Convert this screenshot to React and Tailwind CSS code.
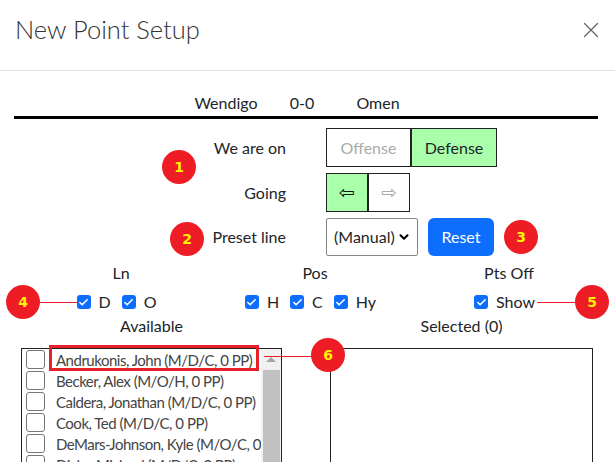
import { X, Check, ChevronDown } from 'lucide-react';

const players = [
    'Andrukonis, John (M/D/C, 0 PP)',
    'Becker, Alex (M/O/H, 0 PP)',
    'Caldera, Jonathan (M/D/C, 0 PP)',
    'Cook, Ted (M/D/C, 0 PP)',
    'DeMars-Johnson, Kyle (M/O/C, 0 PP)',
    'Dicks, Michael (M/D/C, 0 PP)',
];

const Badge = ({ n, className }) => (
    <div
        className={`absolute w-[34px] h-[34px] rounded-full bg-[#ee1c24] flex items-center justify-center text-[#fff200] text-[14px] font-bold font-['DejaVu_Sans',sans-serif] ${className}`}
    >
        {n}
    </div>
);

const Box = () => (
    <span className="w-[14px] h-[14px] rounded-[3px] bg-[#0d6efd] flex items-center justify-center">
        <Check size={11} strokeWidth={3.5} className="text-white" />
    </span>
);

const CheckItem = ({ label }) => (
    <span className="flex items-center gap-[8px]">
        <Box />
        <span>{label}</span>
    </span>
);

const App = () => {
    return (
        <div className="relative w-[615px] h-[462px] overflow-hidden bg-white text-[#212529] text-[16px] font-['Lato',sans-serif]">
            {/* header */}
            <div className="h-[71px] flex items-center justify-between pl-[15px] pr-[11px] border-b border-[#dee2e6]">
                <h1 className="text-[25.5px] font-light text-[#333] -mt-[11px]">New Point Setup</h1>
                <X size={26} strokeWidth={1.2} className="text-[#666] -mt-[11px]" />
            </div>

            {/* score */}
            <div className="ml-[14px] w-[584px] mt-[20px] border-b-[3px] border-black">
                <div className="flex pl-[174px] h-[25px] leading-[24px]">
                    <span className="w-[76px] text-center">Wendigo</span>
                    <span className="w-[76px] text-center">0-0</span>
                    <span className="w-[76px] text-center">Omen</span>
                </div>
            </div>

            {/* settings */}
            <div className="ml-[14px] mt-[9px] grid grid-cols-[272px_auto] gap-x-[40px] gap-y-[6px] items-center">
                <div className="text-right">We are on</div>
                <div className="flex h-[39px]">
                    <button className="w-[85px] border border-[#222] text-[#aaa]">Offense</button>
                    <button className="w-[86px] border border-[#222] bg-[#aaffaa]">Defense</button>
                </div>
                <div className="text-right">Going</div>
                <div className="flex h-[39px] font-['DejaVu_Sans',sans-serif] text-[19px]">
                    <button className="w-[42px] border border-[#222] bg-[#aaffaa] text-[#111]">⇦</button>
                    <button className="w-[42px] border border-[#222] text-[#aaa]">⇨</button>
                </div>
                <div className="text-right">Preset line</div>
                <div className="flex items-center gap-[10px]">
                    <div className="w-[92px] h-[38px] border border-[#888] rounded-[2px] flex items-center justify-between pl-[7px] pr-[6px]">
                        <span>(Manual)</span>
                        <ChevronDown size={14} strokeWidth={3.5} className="text-black" />
                    </div>
                    <button className="w-[66px] h-[38px] rounded-[6px] bg-[#0d6efd] text-white">Reset</button>
                </div>
            </div>

            {/* filters */}
            <div className="ml-[24px] w-[582px] mt-[5px] grid grid-cols-3 text-center leading-[24px]">
                <div>Ln</div>
                <div>Pos</div>
                <div>Pts Off</div>
            </div>
            <div className="ml-[24px] w-[582px] mt-[5px] grid grid-cols-3 leading-[24px]">
                <div className="flex justify-center gap-[11px] pr-[9px]">
                    <CheckItem label="D" />
                    <CheckItem label="O" />
                </div>
                <div className="flex justify-center gap-[11px] pr-[9px]">
                    <CheckItem label="H" />
                    <CheckItem label="C" />
                    <CheckItem label="Hy" />
                </div>
                <div className="flex justify-center pr-[9px]">
                    <CheckItem label="Show" />
                </div>
            </div>

            {/* lists */}
            <div className="ml-[21px] grid grid-cols-[261px_263px] gap-x-[48px] leading-[24px]">
                <div className="text-center">Available</div>
                <div className="text-center">Selected (0)</div>
                <div className="mt-[10px] h-[130px] border border-[#222] border-b-0 flex">
                    <div className="flex-1 overflow-hidden pl-[4px]">
                        {players.map((p) => (
                            <div key={p} className="h-[21px] flex items-center gap-[11px] whitespace-nowrap text-[#444] text-[15px] tracking-[-0.5px]">
                                <span className="shrink-0 w-[19px] h-[19px] rounded-[3px] border border-[#767676] bg-white" />
                                <span>{p}</span>
                            </div>
                        ))}
                    </div>
                    <div className="w-[20px] bg-[#f1f1f1] flex flex-col items-center">
                        <div className="h-[21px] flex items-center justify-center">
                            <span className="w-0 h-0 border-l-[5px] border-r-[5px] border-b-[5px] border-l-transparent border-r-transparent border-b-[#a3a3a3]" />
                        </div>
                        <div className="w-[17px] flex-1 bg-[#c1c1c1]" />
                    </div>
                </div>
                <div className="mt-[10px] h-[130px] border border-[#222] border-b-0" />
            </div>

            {/* annotations */}
            <div className="absolute left-[49px] top-[345px] w-[210px] h-[26px] border-[3px] border-[#e8202a]" />
            <div className="absolute left-[39px] top-[302px] w-[38px] h-px bg-[#e8202a]" />
            <div className="absolute left-[537px] top-[302px] w-[40px] h-px bg-[#e8202a]" />
            <div className="absolute left-[264px] top-[356px] w-[48px] h-px bg-[#e8202a]" />
            <Badge n="1" className="left-[162px] top-[150px]" />
            <Badge n="2" className="left-[170px] top-[222px]" />
            <Badge n="3" className="left-[504px] top-[220px]" />
            <Badge n="4" className="left-[6px] top-[285px]" />
            <Badge n="5" className="left-[575px] top-[285px]" />
            <Badge n="6" className="left-[311px] top-[338px]" />
        </div>
    );
};

export default App;
